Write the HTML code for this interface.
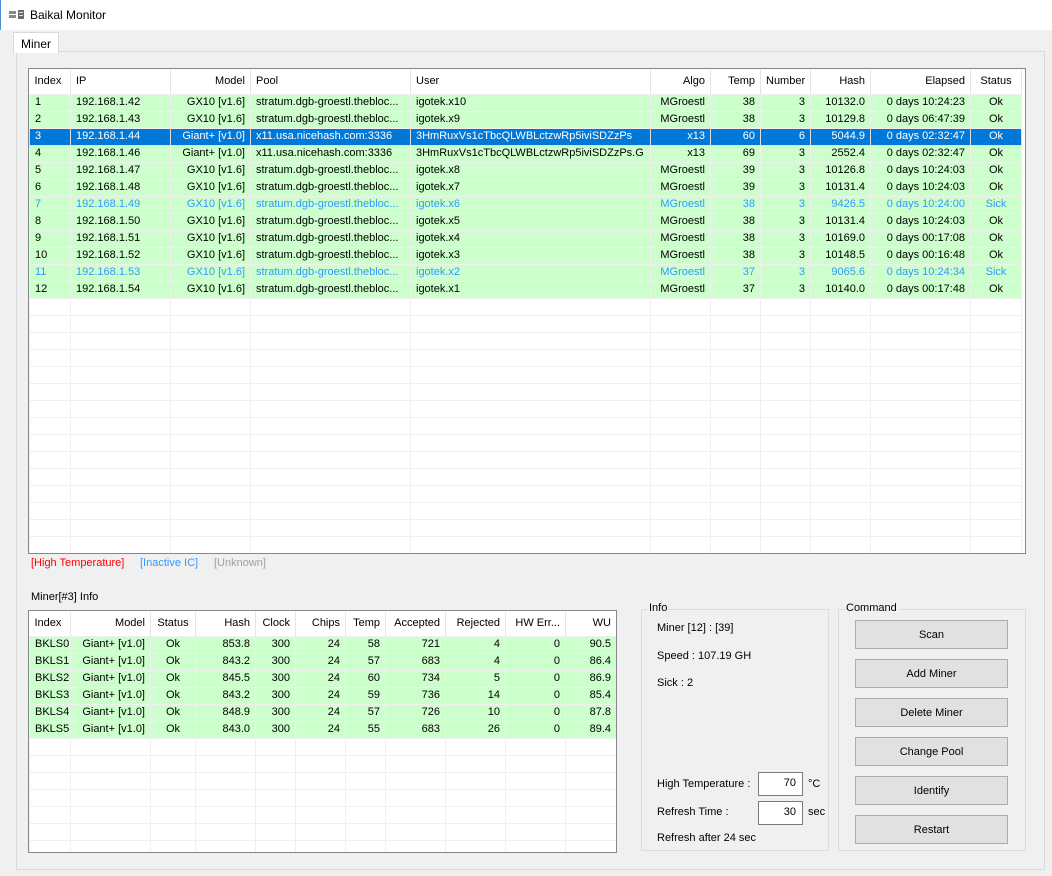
<!DOCTYPE html>
<html><head><meta charset="utf-8">
<style>
*{box-sizing:border-box;margin:0;padding:0}
body{width:1052px;height:876px;background:#f0f0f0;font-family:"Liberation Sans",sans-serif;font-size:11px;color:#000;position:relative;overflow:hidden}
.abs{position:absolute}
.title{left:0;top:0;width:1052px;height:30px;background:#fff;border-left:1px solid #4a90d9}
.wrap{position:absolute;overflow:hidden;background:#fff}
table{border-collapse:collapse;table-layout:fixed}
td,th{height:17px;padding:0 5px;white-space:nowrap;overflow:hidden;font-weight:normal;border:1px solid #f0f0f0;line-height:15px}
th{height:24px;border:none;border-right:1px solid #e5e5e5;background:#fff;text-align:left}
.r{text-align:right}.c{text-align:center}
tr.g td{background:#ccffcc}
tr.s td{background:#0078d7;color:#fff;border-color:#e0e0e0}
tr.k td{background:#ccffcc;color:#3399ff}
tr.e td{background:#fff}
.btn{position:absolute;left:855px;width:153px;height:29px;background:#e1e1e1;border:1px solid #adadad;text-align:center;line-height:28px}
.inp{position:absolute;left:758px;width:45px;height:24px;background:#fff;border:1px solid #7a7a7a;text-align:right;padding-right:6px;line-height:20px}
.grp{position:absolute;border:1px solid #dcdcdc}
.lg{position:absolute;background:#f0f0f0;padding:0 1px;top:-8px;left:6px}
</style></head><body>
<div class="abs title"></div>
<svg class="abs" style="left:9px;top:9px" width="16" height="12"><rect x="0" y="2" width="7" height="3" fill="#8a8a8a"/><rect x="0" y="6" width="7" height="3" fill="#8a8a8a"/><rect x="9" y="1" width="6" height="9" fill="#6a6a6a"/><rect x="10" y="3" width="4" height="1" fill="#ddd"/><rect x="10" y="6" width="4" height="1" fill="#ddd"/></svg>
<div class="abs" style="left:30px;top:8px;font-size:12px">Baikal Monitor</div>
<div class="abs" style="left:16px;top:51px;width:1029px;height:819px;background:#f0f0f0;border:1px solid #d9d9d9"></div>
<div class="abs" style="left:13px;top:32px;width:46px;height:21px;background:#fff;border:1px solid #d9d9d9;border-bottom:none;padding:4px 0 0 7px;font-size:12px">Miner</div>
<div class="abs" style="left:28px;top:68px;width:998px;height:486px;background:#fff;border:1px solid #828790"></div>
<div class="wrap" style="left:29px;top:70px;width:996px;height:483px">
<table style="width:992px">
<colgroup><col style="width:41px"><col style="width:100px"><col style="width:80px"><col style="width:160px"><col style="width:240px"><col style="width:60px"><col style="width:50px"><col style="width:50px"><col style="width:60px"><col style="width:100px"><col style="width:51px"></colgroup>
<tr><th>Index</th><th>IP</th><th class="r">Model</th><th>Pool</th><th>User</th><th class="r">Algo</th><th class="r">Temp</th><th class="r">Number</th><th class="r">Hash</th><th class="r">Elapsed</th><th class="c">Status</th></tr>
<tr class="g"><td>1</td><td>192.168.1.42</td><td class="r">GX10 [v1.6]</td><td>stratum.dgb-groestl.thebloc...</td><td>igotek.x10</td><td class="r">MGroestl</td><td class="r">38</td><td class="r">3</td><td class="r">10132.0</td><td class="r">0 days 10:24:23</td><td class="c">Ok</td></tr>
<tr class="g"><td>2</td><td>192.168.1.43</td><td class="r">GX10 [v1.6]</td><td>stratum.dgb-groestl.thebloc...</td><td>igotek.x9</td><td class="r">MGroestl</td><td class="r">38</td><td class="r">3</td><td class="r">10129.8</td><td class="r">0 days 06:47:39</td><td class="c">Ok</td></tr>
<tr class="s"><td>3</td><td>192.168.1.44</td><td class="r">Giant+ [v1.0]</td><td>x11.usa.nicehash.com:3336</td><td>3HmRuxVs1cTbcQLWBLctzwRp5iviSDZzPs</td><td class="r">x13</td><td class="r">60</td><td class="r">6</td><td class="r">5044.9</td><td class="r">0 days 02:32:47</td><td class="c">Ok</td></tr>
<tr class="g"><td>4</td><td>192.168.1.46</td><td class="r">Giant+ [v1.0]</td><td>x11.usa.nicehash.com:3336</td><td>3HmRuxVs1cTbcQLWBLctzwRp5iviSDZzPs.G</td><td class="r">x13</td><td class="r">69</td><td class="r">3</td><td class="r">2552.4</td><td class="r">0 days 02:32:47</td><td class="c">Ok</td></tr>
<tr class="g"><td>5</td><td>192.168.1.47</td><td class="r">GX10 [v1.6]</td><td>stratum.dgb-groestl.thebloc...</td><td>igotek.x8</td><td class="r">MGroestl</td><td class="r">39</td><td class="r">3</td><td class="r">10126.8</td><td class="r">0 days 10:24:03</td><td class="c">Ok</td></tr>
<tr class="g"><td>6</td><td>192.168.1.48</td><td class="r">GX10 [v1.6]</td><td>stratum.dgb-groestl.thebloc...</td><td>igotek.x7</td><td class="r">MGroestl</td><td class="r">39</td><td class="r">3</td><td class="r">10131.4</td><td class="r">0 days 10:24:03</td><td class="c">Ok</td></tr>
<tr class="k"><td>7</td><td>192.168.1.49</td><td class="r">GX10 [v1.6]</td><td>stratum.dgb-groestl.thebloc...</td><td>igotek.x6</td><td class="r">MGroestl</td><td class="r">38</td><td class="r">3</td><td class="r">9426.5</td><td class="r">0 days 10:24:00</td><td class="c">Sick</td></tr>
<tr class="g"><td>8</td><td>192.168.1.50</td><td class="r">GX10 [v1.6]</td><td>stratum.dgb-groestl.thebloc...</td><td>igotek.x5</td><td class="r">MGroestl</td><td class="r">38</td><td class="r">3</td><td class="r">10131.4</td><td class="r">0 days 10:24:03</td><td class="c">Ok</td></tr>
<tr class="g"><td>9</td><td>192.168.1.51</td><td class="r">GX10 [v1.6]</td><td>stratum.dgb-groestl.thebloc...</td><td>igotek.x4</td><td class="r">MGroestl</td><td class="r">38</td><td class="r">3</td><td class="r">10169.0</td><td class="r">0 days 00:17:08</td><td class="c">Ok</td></tr>
<tr class="g"><td>10</td><td>192.168.1.52</td><td class="r">GX10 [v1.6]</td><td>stratum.dgb-groestl.thebloc...</td><td>igotek.x3</td><td class="r">MGroestl</td><td class="r">38</td><td class="r">3</td><td class="r">10148.5</td><td class="r">0 days 00:16:48</td><td class="c">Ok</td></tr>
<tr class="k"><td>11</td><td>192.168.1.53</td><td class="r">GX10 [v1.6]</td><td>stratum.dgb-groestl.thebloc...</td><td>igotek.x2</td><td class="r">MGroestl</td><td class="r">37</td><td class="r">3</td><td class="r">9065.6</td><td class="r">0 days 10:24:34</td><td class="c">Sick</td></tr>
<tr class="g"><td>12</td><td>192.168.1.54</td><td class="r">GX10 [v1.6]</td><td>stratum.dgb-groestl.thebloc...</td><td>igotek.x1</td><td class="r">MGroestl</td><td class="r">37</td><td class="r">3</td><td class="r">10140.0</td><td class="r">0 days 00:17:48</td><td class="c">Ok</td></tr>
<tr class="e"><td></td><td></td><td></td><td></td><td></td><td></td><td></td><td></td><td></td><td></td><td></td></tr>
<tr class="e"><td></td><td></td><td></td><td></td><td></td><td></td><td></td><td></td><td></td><td></td><td></td></tr>
<tr class="e"><td></td><td></td><td></td><td></td><td></td><td></td><td></td><td></td><td></td><td></td><td></td></tr>
<tr class="e"><td></td><td></td><td></td><td></td><td></td><td></td><td></td><td></td><td></td><td></td><td></td></tr>
<tr class="e"><td></td><td></td><td></td><td></td><td></td><td></td><td></td><td></td><td></td><td></td><td></td></tr>
<tr class="e"><td></td><td></td><td></td><td></td><td></td><td></td><td></td><td></td><td></td><td></td><td></td></tr>
<tr class="e"><td></td><td></td><td></td><td></td><td></td><td></td><td></td><td></td><td></td><td></td><td></td></tr>
<tr class="e"><td></td><td></td><td></td><td></td><td></td><td></td><td></td><td></td><td></td><td></td><td></td></tr>
<tr class="e"><td></td><td></td><td></td><td></td><td></td><td></td><td></td><td></td><td></td><td></td><td></td></tr>
<tr class="e"><td></td><td></td><td></td><td></td><td></td><td></td><td></td><td></td><td></td><td></td><td></td></tr>
<tr class="e"><td></td><td></td><td></td><td></td><td></td><td></td><td></td><td></td><td></td><td></td><td></td></tr>
<tr class="e"><td></td><td></td><td></td><td></td><td></td><td></td><td></td><td></td><td></td><td></td><td></td></tr>
<tr class="e"><td></td><td></td><td></td><td></td><td></td><td></td><td></td><td></td><td></td><td></td><td></td></tr>
<tr class="e"><td></td><td></td><td></td><td></td><td></td><td></td><td></td><td></td><td></td><td></td><td></td></tr>
<tr class="e"><td></td><td></td><td></td><td></td><td></td><td></td><td></td><td></td><td></td><td></td><td></td></tr>
<tr class="e"><td></td><td></td><td></td><td></td><td></td><td></td><td></td><td></td><td></td><td></td><td></td></tr>
</table></div>
<div class="abs" style="left:31px;top:557px;color:#ff0000">[High Temperature]</div>
<div class="abs" style="left:140px;top:557px;color:#3399ff">[Inactive IC]</div>
<div class="abs" style="left:214px;top:557px;color:#a0a0a0">[Unknown]</div>
<div class="abs" style="left:31px;top:591px">Miner[#3] Info</div>
<div class="abs" style="left:28px;top:610px;width:589px;height:243px;background:#fff;border:1px solid #828790"></div>
<div class="wrap" style="left:29px;top:612px;width:587px;height:240px">
<table style="width:587px">
<colgroup><col style="width:41px"><col style="width:80px"><col style="width:45px"><col style="width:60px"><col style="width:40px"><col style="width:50px"><col style="width:40px"><col style="width:60px"><col style="width:60px"><col style="width:60px"><col style="width:51px"></colgroup>
<tr><th style="height:23px">Index</th><th class="r">Model</th><th class="c">Status</th><th class="r">Hash</th><th class="r">Clock</th><th class="r">Chips</th><th class="r">Temp</th><th class="r">Accepted</th><th class="r">Rejected</th><th class="r">HW Err...</th><th class="r">WU</th></tr>
<tr class="g"><td>BKLS0</td><td class="r">Giant+ [v1.0]</td><td class="c">Ok</td><td class="r">853.8</td><td class="r">300</td><td class="r">24</td><td class="r">58</td><td class="r">721</td><td class="r">4</td><td class="r">0</td><td class="r">90.5</td></tr>
<tr class="g"><td>BKLS1</td><td class="r">Giant+ [v1.0]</td><td class="c">Ok</td><td class="r">843.2</td><td class="r">300</td><td class="r">24</td><td class="r">57</td><td class="r">683</td><td class="r">4</td><td class="r">0</td><td class="r">86.4</td></tr>
<tr class="g"><td>BKLS2</td><td class="r">Giant+ [v1.0]</td><td class="c">Ok</td><td class="r">845.5</td><td class="r">300</td><td class="r">24</td><td class="r">60</td><td class="r">734</td><td class="r">5</td><td class="r">0</td><td class="r">86.9</td></tr>
<tr class="g"><td>BKLS3</td><td class="r">Giant+ [v1.0]</td><td class="c">Ok</td><td class="r">843.2</td><td class="r">300</td><td class="r">24</td><td class="r">59</td><td class="r">736</td><td class="r">14</td><td class="r">0</td><td class="r">85.4</td></tr>
<tr class="g"><td>BKLS4</td><td class="r">Giant+ [v1.0]</td><td class="c">Ok</td><td class="r">848.9</td><td class="r">300</td><td class="r">24</td><td class="r">57</td><td class="r">726</td><td class="r">10</td><td class="r">0</td><td class="r">87.8</td></tr>
<tr class="g"><td>BKLS5</td><td class="r">Giant+ [v1.0]</td><td class="c">Ok</td><td class="r">843.0</td><td class="r">300</td><td class="r">24</td><td class="r">55</td><td class="r">683</td><td class="r">26</td><td class="r">0</td><td class="r">89.4</td></tr>
<tr class="e"><td></td><td></td><td></td><td></td><td></td><td></td><td></td><td></td><td></td><td></td><td></td></tr>
<tr class="e"><td></td><td></td><td></td><td></td><td></td><td></td><td></td><td></td><td></td><td></td><td></td></tr>
<tr class="e"><td></td><td></td><td></td><td></td><td></td><td></td><td></td><td></td><td></td><td></td><td></td></tr>
<tr class="e"><td></td><td></td><td></td><td></td><td></td><td></td><td></td><td></td><td></td><td></td><td></td></tr>
<tr class="e"><td></td><td></td><td></td><td></td><td></td><td></td><td></td><td></td><td></td><td></td><td></td></tr>
<tr class="e"><td></td><td></td><td></td><td></td><td></td><td></td><td></td><td></td><td></td><td></td><td></td></tr>
<tr class="e"><td></td><td></td><td></td><td></td><td></td><td></td><td></td><td></td><td></td><td></td><td></td></tr>
</table></div>
<div class="grp" style="left:641px;top:609px;width:188px;height:242px"><span class="lg">Info</span></div>
<div class="abs" style="left:657px;top:622px">Miner [12] : [39]</div>
<div class="abs" style="left:657px;top:650px">Speed : 107.19 GH</div>
<div class="abs" style="left:657px;top:677px">Sick : 2</div>
<div class="abs" style="left:657px;top:778px">High Temperature :</div>
<div class="inp" style="top:772px">70</div>
<div class="abs" style="left:808px;top:778px">°C</div>
<div class="abs" style="left:657px;top:806px">Refresh Time :</div>
<div class="inp" style="top:801px">30</div>
<div class="abs" style="left:808px;top:806px">sec</div>
<div class="abs" style="left:657px;top:832px">Refresh after 24 sec</div>
<div class="grp" style="left:838px;top:609px;width:188px;height:242px"><span class="lg">Command</span></div>
<div class="btn" style="top:620px">Scan</div>
<div class="btn" style="top:659px">Add Miner</div>
<div class="btn" style="top:698px">Delete Miner</div>
<div class="btn" style="top:737px">Change Pool</div>
<div class="btn" style="top:776px">Identify</div>
<div class="btn" style="top:815px">Restart</div>
</body></html>
